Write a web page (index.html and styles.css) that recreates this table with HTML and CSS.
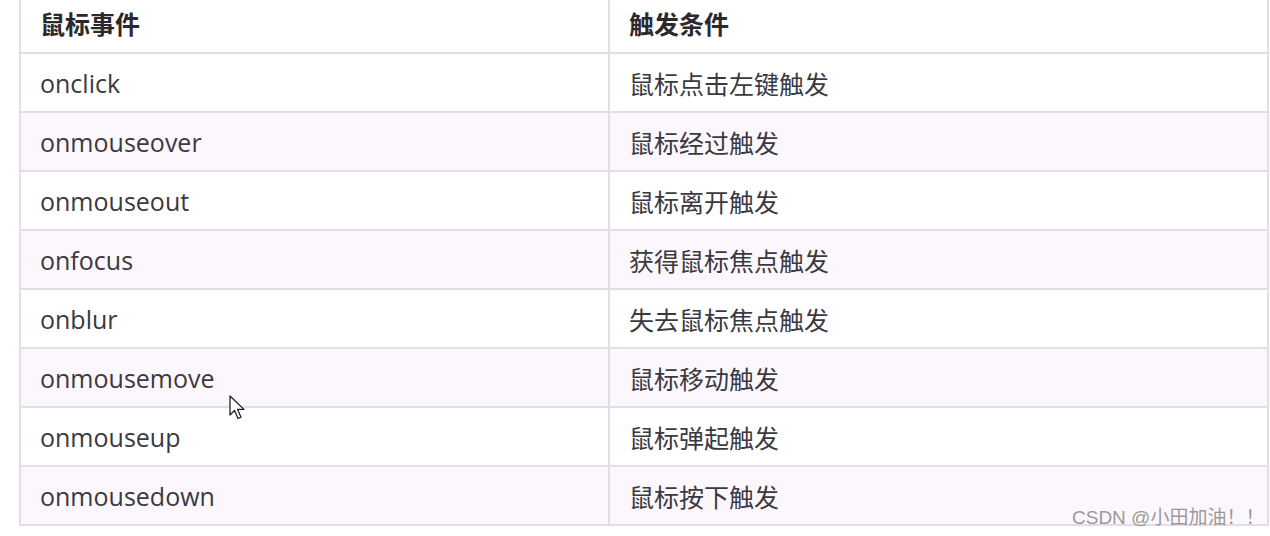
FILE: index.html
```html
<!DOCTYPE html>
<html lang="zh">
<head>
<meta charset="utf-8">
<link rel="stylesheet" href="styles.css">
</head>
<body>
<div class="page">
  <table class="events">
    <colgroup><col class="col-event"><col class="col-cond"></colgroup>
    <thead>
      <tr><th>鼠标事件</th><th>触发条件</th></tr>
    </thead>
    <tbody>
      <tr><td>onclick</td><td>鼠标点击左键触发</td></tr>
      <tr><td>onmouseover</td><td>鼠标经过触发</td></tr>
      <tr><td>onmouseout</td><td>鼠标离开触发</td></tr>
      <tr><td>onfocus</td><td>获得鼠标焦点触发</td></tr>
      <tr><td>onblur</td><td>失去鼠标焦点触发</td></tr>
      <tr><td>onmousemove</td><td>鼠标移动触发</td></tr>
      <tr><td>onmouseup</td><td>鼠标弹起触发</td></tr>
      <tr><td>onmousedown</td><td>鼠标按下触发</td></tr>
    </tbody>
  </table>
  <svg class="cursor" width="18" height="28" viewBox="0 0 18 28">
    <path d="M1 1 L1 20 L5.5 15.5 L9 23.5 L12 22.2 L8.6 14.4 L15 14.4 Z" fill="#fff" stroke="#222" stroke-width="1.3" stroke-linejoin="round"/>
  </svg>
  <div class="watermark">CSDN @小田加油！！</div>
</div>
</body>
</html>
```
FILE: styles.css
```css
html, body {
  margin: 0;
  padding: 0;
  background: #ffffff;
}
.page {
  position: relative;
  width: 1270px;
  height: 536px;
  overflow: hidden;
  padding-left: 19px;
  box-sizing: border-box;
}
.events {
  border-collapse: collapse;
  width: 1250px;
  font-family: "Open Sans", "Noto Sans CJK SC", sans-serif;
  font-size: 25px;
  color: #3b3940;
  table-layout: fixed;
}
.col-event {
  width: 589px;
}
.events th, .events td {
  border: 2px solid #e3dde8;
  text-align: left;
  padding: 0 0 0 19px;
  height: 57px;
}
.events thead th {
  border-top: none;
  height: 46px;
  padding-bottom: 6px;
  font-weight: bold;
  color: #2b292e;
  font-family: "Noto Sans CJK SC", sans-serif;
}
.events tbody tr:nth-child(even) td {
  background: #fcf7fc;
}
.events tbody td:last-child {
  font-family: "Noto Sans CJK SC", sans-serif;
}
.cursor {
  position: absolute;
  left: 229px;
  top: 395px;
}
.watermark {
  position: absolute;
  left: 1072px;
  top: 502px;
  font-family: "Liberation Sans", "Noto Sans CJK SC", sans-serif;
  font-size: 19px;
  color: #9a9a9a;
}
```
